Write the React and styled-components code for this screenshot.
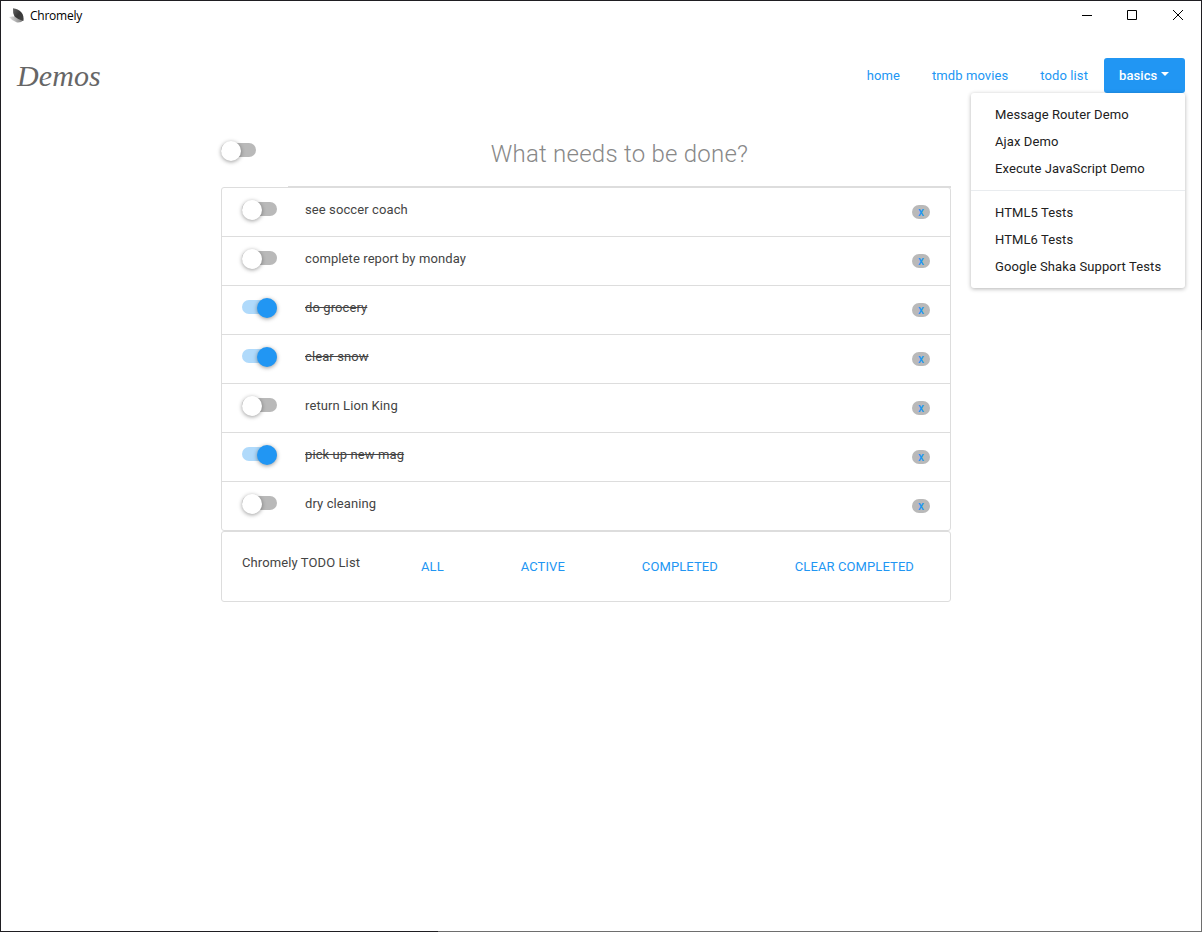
import React from "react";
import styled, { createGlobalStyle, css } from "styled-components";

const BLUE = "#2196f3";

const GlobalStyle = createGlobalStyle`
  * { box-sizing: border-box; }
  body {
    margin: 0;
    background: #fff;
    color: #444;
    font: 400 13px/19.5px Roboto, "Liberation Sans", sans-serif;
    letter-spacing: 0.1px;
  }
`;

const Window = styled.div`
  position: relative;
  height: 932px;
  background: #fff;
  border: 1px solid #1f1e22;
  border-bottom: 0;
  border-right: 0;
  display: flex;
  flex-direction: column;
`;

const RightEdge = styled.div`
  position: absolute;
  top: 0;
  right: 0;
  bottom: 0;
  width: 1px;
  background: linear-gradient(#1f1e22 329px, #6e6e6e 329px);
`;

const BottomEdge = styled.div`
  position: absolute;
  left: 0;
  right: 0;
  bottom: 0;
  height: 1px;
  background: linear-gradient(90deg, #1f1e22 437px, #6e6e6e 437px);
`;

const TitleBar = styled.header`
  display: flex;
  align-items: center;
  height: 30px;
  padding-left: 8px;
`;

const Title = styled.span`
  flex: 1;
  margin-left: 5px;
  font: 12px/16px "Open Sans", "Noto Sans", sans-serif;
  letter-spacing: -0.25px;
  color: #000;
`;

const Controls = styled.div`
  display: flex;
  align-items: center;
`;

const Control = styled.svg`
  display: block;
  width: 46px;
  height: 30px;
  fill: none;
  stroke: #000;
`;

const Navbar = styled.nav`
  display: flex;
  align-items: center;
  height: 89px;
  padding: 0 17px 0 16px;
`;

const Brand = styled.h1`
  flex: 1;
  margin: 0;
  font: italic 400 30px/36px "Liberation Serif", serif;
  color: #666;
`;

const NavList = styled.div`
  display: flex;
`;

const NavLink = styled.a`
  display: block;
  height: 35px;
  padding: 8px 16px;
  line-height: 19px;
  color: ${BLUE};
`;

const Dropdown = styled.div`
  position: relative;
`;

const DropdownToggle = styled.button`
  display: flex;
  align-items: center;
  width: 81px;
  height: 35px;
  padding: 0 0 0 15px;
  border: 0;
  border-radius: 3px;
  background: ${BLUE};
  color: #fff;
  font: 500 13px/19px Roboto, sans-serif;
  letter-spacing: 0.1px;

  &::after {
    content: "";
    margin: -3px 0 0 4px;
    border: 4px solid transparent;
    border-top-color: #fff;
    border-bottom: 0;
  }
`;

const Menu = styled.div`
  position: absolute;
  top: 35px;
  right: 0;
  width: 214px;
  padding: 8px 0;
  background: #fff;
  border-radius: 3px;
  box-shadow: 0 1px 4px rgba(0, 0, 0, 0.3);
`;

const MenuItem = styled.a`
  display: block;
  padding: 4px 24px;
  line-height: 19px;
  color: #212121;
  white-space: nowrap;
`;

const MenuDivider = styled.div`
  height: 1px;
  margin: 8px 0;
  background: #e9ecef;
`;

const Main = styled.main`
  width: 730px;
  margin-left: 220px;
  padding-top: 10px;
`;

const NewTodo = styled.div`
  display: flex;
  height: 57px;
`;

const ToggleAll = styled.div`
  width: 67px;
  padding-top: 11px;
`;

const TodoPrompt = styled.div`
  flex: 1;
  height: 58px;
  padding-top: 8px;
  border-bottom: 2px solid #ddd;
  text-align: center;
  font-size: 24px;
  font-weight: 300;
  line-height: 32px;
  letter-spacing: 0.24px;
  color: #888;
`;

const Switch = styled.span`
  position: relative;
  display: block;
  width: 35px;
  height: 20px;

  &::before {
    content: "";
    position: absolute;
    inset: 2px 0 4px;
    border-radius: 7px;
    background: ${(p) => (p.$on ? "#b0dafb" : "#b9b9b9")};
  }

  &::after {
    content: "";
    position: absolute;
    top: 0;
    left: ${(p) => (p.$on ? 15 : 0)}px;
    width: 20px;
    height: 20px;
    border-radius: 50%;
    background: ${(p) => (p.$on ? BLUE : "#fff")};
    box-shadow: 0 1px 4px rgba(0, 0, 0, 0.4);
  }
`;

const panel = css`
  border: 1px solid #ddd;
  border-radius: 3px;
`;

const TodoList = styled.ul`
  ${panel}
  height: 344px;
  margin: 0;
  padding: 0;
  list-style: none;
`;

const TodoRow = styled.li`
  display: flex;
  align-items: flex-start;
  height: 49px;
  padding: 12px 20px 0;

  & + & {
    border-top: 1px solid #ddd;
  }

  &:first-child {
    height: 48px;
  }
`;

const TodoText = styled.span`
  flex: 1;
  margin-left: 28px;
  line-height: 20px;
  text-decoration: ${(p) => (p.$done ? "line-through" : "none")};
`;

const Remove = styled.button`
  width: 18px;
  height: 14px;
  margin-top: 5px;
  padding: 0;
  border: 0;
  border-radius: 7px;
  background: #b9b9b9;
  color: ${BLUE};
  font: 500 12px/14px Roboto, sans-serif;
  text-align: center;
`;

const Footer = styled.footer`
  ${panel}
  display: flex;
  height: 71px;
  padding: 21px 0 0 20px;
`;

const FooterLabel = styled.span`
  width: 162px;
  line-height: 20px;
`;

const Filters = styled.div`
  display: flex;
  flex: 1;
  justify-content: space-between;
  padding: 4px 36px 0 17px;
`;

const Filter = styled.a`
  line-height: 20px;
  color: ${BLUE};
  text-transform: uppercase;
`;

const todos = [
  ["see soccer coach", false],
  ["complete report by monday", false],
  ["do grocery", true],
  ["clear snow", true],
  ["return Lion King", false],
  ["pick up new mag", true],
  ["dry cleaning", false],
];

function Logo() {
  return (
    <svg width="16" height="16" viewBox="0 0 16 16">
      <defs>
        <linearGradient id="wing" x1="0" y1="0" x2="1" y2="1">
          <stop offset="0" stopColor="#666" />
          <stop offset="0.5" stopColor="#383838" />
          <stop offset="1" stopColor="#444" />
        </linearGradient>
        <linearGradient id="tail" x1="0" y1="0" x2="1" y2="0">
          <stop offset="0" stopColor="#e4e4e4" />
          <stop offset="1" stopColor="#777" />
        </linearGradient>
      </defs>
      <path d="M0 9 Q6 7 14.5 12 Q12 15 8 14.5 Q3 13 0 9Z" fill="url(#tail)" />
      <path d="M4 0.2 Q9 0.5 12.5 4.5 Q15.3 8 14.3 13 Q9 11.5 5.5 8.5 Q3.6 5 4 0.2Z" fill="url(#wing)" />
    </svg>
  );
}

export default function App() {
  return (
    <>
      <GlobalStyle />
      <Window>
        <TitleBar>
          <Logo />
          <Title>Chromely</Title>
          <Controls>
            <Control viewBox="0 0 46 30"><path d="M18 14.5h10" /></Control>
            <Control viewBox="0 0 46 30"><path d="M17.5 9.5h9v9h-9z" /></Control>
            <Control viewBox="0 0 46 30"><path d="M17 9l10 10M27 9L17 19" /></Control>
          </Controls>
        </TitleBar>
        <Navbar>
          <Brand>Demos</Brand>
          <NavList>
            <NavLink>home</NavLink>
            <NavLink>tmdb movies</NavLink>
            <NavLink>todo list</NavLink>
            <Dropdown>
              <DropdownToggle>basics</DropdownToggle>
              <Menu>
                <MenuItem>Message Router Demo</MenuItem>
                <MenuItem>Ajax Demo</MenuItem>
                <MenuItem>Execute JavaScript Demo</MenuItem>
                <MenuDivider />
                <MenuItem>HTML5 Tests</MenuItem>
                <MenuItem>HTML6 Tests</MenuItem>
                <MenuItem>Google Shaka Support Tests</MenuItem>
              </Menu>
            </Dropdown>
          </NavList>
        </Navbar>
        <Main>
          <NewTodo>
            <ToggleAll><Switch /></ToggleAll>
            <TodoPrompt>What needs to be done?</TodoPrompt>
          </NewTodo>
          <TodoList>
            {todos.map(([text, done]) => (
              <TodoRow key={text}>
                <Switch $on={done} />
                <TodoText $done={done}>{text}</TodoText>
                <Remove>x</Remove>
              </TodoRow>
            ))}
          </TodoList>
          <Footer>
            <FooterLabel>Chromely TODO List</FooterLabel>
            <Filters>
              <Filter>All</Filter>
              <Filter>Active</Filter>
              <Filter>Completed</Filter>
              <Filter>Clear completed</Filter>
            </Filters>
          </Footer>
        </Main>
        <RightEdge />
        <BottomEdge />
      </Window>
    </>
  );
}
